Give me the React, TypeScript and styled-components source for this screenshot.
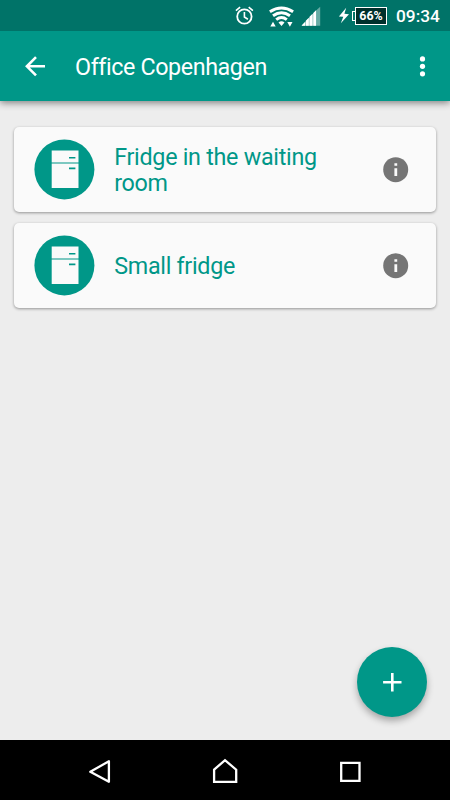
import React from "react";
import styled, { createGlobalStyle } from "styled-components";

const teal = "#009788";

const GlobalStyle = createGlobalStyle`
  * { box-sizing: border-box; }
  body { margin: 0; background: #ededed; font-family: Roboto, "Liberation Sans", sans-serif; }
  svg { display: block; flex: none; }
  button { border: 0; padding: 0; margin: 0; background: none; font: inherit; }
`;

const Screen = styled.div`
  display: flex;
  flex-direction: column;
  width: 450px;
  height: 800px;
  overflow: hidden;
  background: #ededed;
`;

const StatusBar = styled.header`
  position: relative;
  z-index: 1;
  display: flex;
  justify-content: flex-end;
  align-items: center;
  flex: none;
  height: 31px;
  padding-right: 10px;
  background: #007368;
  color: #fff;
`;

const StatusIcon = styled.svg<{ $gap: number }>`
  margin-right: ${(p) => p.$gap}px;
`;

const Battery = styled.div`
  display: flex;
  align-items: center;
  width: 35px;
  height: 31px;
  margin-right: 9px;
`;

const BatteryTip = styled.div`
  width: 3px;
  height: 10px;
  border: 1px solid #fff;
  border-right: 0;
`;

const BatteryBody = styled.div`
  flex: 1;
  height: 18px;
  border: 1px solid #fff;
  background: #00302c;
  font-size: 12.4px;
  line-height: 16px;
  font-weight: 700;
  text-align: center;
`;

const Clock = styled.time`
  width: 44px;
  padding-top: 1px;
  white-space: nowrap;
  font-size: 17.3px;
  line-height: 20px;
  font-weight: 500;
`;

const AppBar = styled.nav`
  display: flex;
  align-items: center;
  flex: none;
  height: 70px;
  padding: 0 15px 0 20px;
  background: ${teal};
  color: #fff;
  box-shadow: 0 2px 7px rgba(0, 0, 0, 0.45);
`;

const BarButton = styled.button`
  display: flex;
  color: inherit;
`;

const Title = styled.h1`
  flex: 1;
  margin: 2px 0 0 25px;
  font-size: 23.3px;
  letter-spacing: -0.4px;
  line-height: 30px;
  font-weight: 400;
  white-space: nowrap;
`;

const List = styled.main`
  display: flex;
  flex-direction: column;
  gap: 11px;
  flex: 1;
  padding: 26px 14px 0;
`;

const Card = styled.article`
  display: flex;
  align-items: center;
  height: 85px;
  padding: 0 27px 0 20px;
  border-radius: 5px;
  background: #fafafa;
  box-shadow: 0 1px 3px rgba(0, 0, 0, 0.38);
`;

const CardName = styled.h2`
  flex: 1;
  margin: 1px 20px 0 19.2px;
  color: ${teal};
  font-size: 23.3px;
  letter-spacing: -0.28px;
  line-height: 26px;
  font-weight: 400;
`;

const Fab = styled.button`
  position: absolute;
  left: 357px;
  top: 647px;
  display: grid;
  place-items: center;
  width: 70px;
  height: 70px;
  border-radius: 50%;
  background: ${teal};
  box-shadow: 0 4px 7px rgba(0, 0, 0, 0.3);
`;

const NavBar = styled.footer`
  display: flex;
  align-items: center;
  justify-content: space-between;
  flex: none;
  height: 60px;
  padding: 4px 87px 0;
  background: #000;
`;

const FridgeIcon = () => (
  <svg width="61" height="61" viewBox="0 0 61 61">
    <circle cx="30.4" cy="30.4" r="30" fill={teal} />
    <path d="M17.7 11.6h26.8V49H17.7z" fill="#fafafa" />
    <path d="M17 24h28" stroke={teal} strokeWidth="1" />
    <path d="M35 18.8h6.4M35 29.4h6.4" stroke={teal} strokeWidth="1.6" />
  </svg>
);

const InfoIcon = () => (
  <svg width="26" height="26" viewBox="0 0 26 26">
    <circle cx="12.7" cy="12.7" r="12.5" fill="#757575" />
    <path d="M11.4 6.2h2.8v2.6h-2.8zM11.4 11.3h2.8v7.8h-2.8z" fill="#fafafa" />
  </svg>
);

const fridges = ["Fridge in the waiting room", "Small fridge"];

export default function App() {
  return (
    <>
      <GlobalStyle />
      <Screen>
        <StatusBar>
          <StatusIcon $gap={15} width="19" height="31" viewBox="0 0 19 31" fill="none" stroke="#fff" strokeWidth="1.8">
            <circle cx="9.4" cy="16.5" r="7.2" />
            <path d="M9.4 12v5l3.5 2.2M.9 10.7l4.2-3.5M17.9 10.7l-4.2-3.5" strokeWidth="1.6" />
          </StatusIcon>
          <StatusIcon $gap={7} width="25" height="31" viewBox="0 0 25 31" fill="none" stroke="#fff" strokeWidth="3">
            <path d="M.9 11.7Q12.5 4.2 24.1 11.7M4 15.8Q12.5 9.6 21 15.8M7.2 19.6Q12.5 15.4 17.8 19.6" />
            <path d="M9.5 22.6Q12.5 20 15.5 22.6L12.5 26zM1.3 26.5l2.7-4.7 2.7 4.7zM18.3 22h5.2l-2.6 4.7z" fill="#fff" stroke="none" />
          </StatusIcon>
          <StatusIcon $gap={17} width="20" height="31" viewBox="0 0 20 31" fill="#fff">
            <path d="M.6 25.8L15.3 10.2v15.6z" opacity=".55" />
            <path d="M.8 25.8v-.6l3.2-3.3v3.9zM4.8 25.8v-5l3-3.1v8.1zM8.5 25.8v-9l3-3.1v12.1zM12.3 25.8V13l3-3v15.8z" />
            <path d="M15.9 25.8V9.7l3.3-2.9v19z" opacity=".4" />
          </StatusIcon>
          <StatusIcon $gap={2} width="12" height="31" viewBox="0 0 12 31" fill="#fff">
            <path d="M8.2 7.8L.9 16.4l4.4.4L2.8 23.2l8.2-9-4.6-.4z" />
          </StatusIcon>
          <Battery>
            <BatteryTip />
            <BatteryBody>66%</BatteryBody>
          </Battery>
          <Clock>09:34</Clock>
        </StatusBar>
        <AppBar>
          <BarButton aria-label="Back">
            <svg width="30" height="30" viewBox="0 0 30 30" fill="none" stroke="#fff" strokeWidth="2.6">
              <path d="M25 15.3H7M16 6.2L6.9 15.3 16 24.4" />
            </svg>
          </BarButton>
          <Title>Office Copenhagen</Title>
          <BarButton aria-label="More options">
            <svg width="24" height="30" viewBox="0 0 24 30" fill="#fff">
              <circle cx="11.5" cy="7.9" r="2.6" />
              <circle cx="11.5" cy="15.3" r="2.6" />
              <circle cx="11.5" cy="22.8" r="2.6" />
            </svg>
          </BarButton>
        </AppBar>
        <List>
          {fridges.map((name) => (
            <Card key={name}>
              <FridgeIcon />
              <CardName>{name}</CardName>
              <InfoIcon />
            </Card>
          ))}
        </List>
        <NavBar>
          <svg width="24" height="30" viewBox="0 0 24 30" fill="none" stroke="#fff" strokeWidth="2.3">
            <path d="M21.9 4.3v20.5L3.3 14.8z" strokeLinejoin="round" />
          </svg>
          <svg width="26" height="30" viewBox="0 0 26 30" fill="none" stroke="#fff" strokeWidth="2.3">
            <path d="M2.1 12.7L13 3.2l11.2 9.5v12.1H2.1z" />
          </svg>
          <svg width="24" height="30" viewBox="0 0 24 30" fill="none" stroke="#fff" strokeWidth="2.3">
            <path d="M2.2 5.8h18.3v18H2.2z" />
          </svg>
        </NavBar>
      </Screen>
      <Fab aria-label="Add fridge">
        <svg width="20" height="20" viewBox="0 0 20 20">
          <path d="M10.3 1v18.4M1.1 10.2h18.4" stroke="#fff" strokeWidth="2.6" />
        </svg>
      </Fab>
    </>
  );
}
